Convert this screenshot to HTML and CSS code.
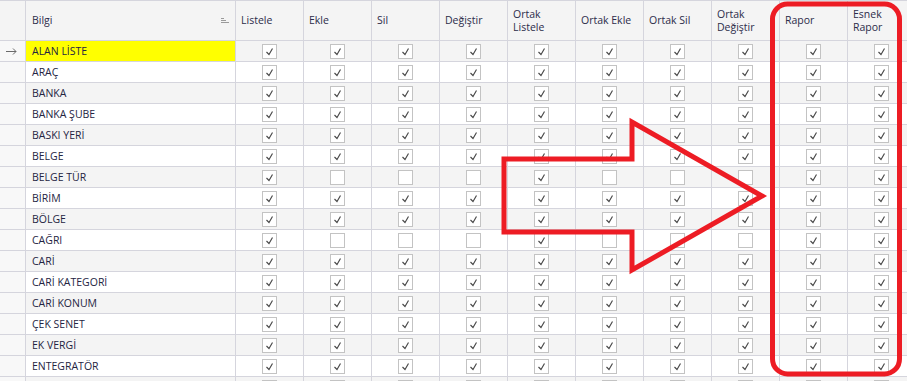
FILE: index.html
```html
<!DOCTYPE html>
<html>

<head>
    <title>Yetkiler</title>
    <link rel="stylesheet" href="styles.css">
</head>

<body>

    <div class="grid" id="grid">
        <div class="row head">
            <div class="ind"></div>
            <div class="name-head">
                <span>Bilgi</span>
                <svg class="sort" width="9" height="6" viewBox="0 0 9 6">
                    <path d="M0 0.5H3M0 2.5H5M0 4.5H8" stroke="#9a9a9a" stroke-width="1" />
                </svg>
            </div>
            <div>Listele</div>
            <div>Ekle</div>
            <div>Sil</div>
            <div>Değiştir</div>
            <div>Ortak<br>Listele</div>
            <div>Ortak Ekle</div>
            <div>Ortak Sil</div>
            <div>Ortak<br>Değiştir</div>
            <div>Rapor</div>
            <div>Esnek<br>Rapor</div>
        </div>

        <svg class="overlay" width="907" height="381" viewBox="0 0 907 381">
            <polygon points="504,159 632,159 632,122 762,196 632,270 632,232 504,232" fill="none" stroke="#ed1c24" stroke-width="5" stroke-linejoin="miter" />
            <rect x="772.5" y="4" width="127" height="370" rx="15" ry="15" fill="none" stroke="#ed1c24" stroke-width="5" />
        </svg>
    </div>

    <script>
        const rows = [
            [ "ALAN LİSTE", 1 ], [ "ARAÇ", 1 ], [ "BANKA", 1 ], [ "BANKA ŞUBE", 1 ],
            [ "BASKI YERİ", 1 ], [ "BELGE", 1 ], [ "BELGE TÜR", 0 ], [ "BİRİM", 1 ],
            [ "BÖLGE", 1 ], [ "CAĞRI", 0 ], [ "CARİ", 1 ], [ "CARİ KATEGORİ", 1 ],
            [ "CARİ KONUM", 1 ], [ "ÇEK SENET", 1 ], [ "EK VERGİ", 1 ], [ "ENTEGRATÖR", 1 ], [ "", 1 ]
        ];

        // Ekle, Sil, Değiştir, Ortak Ekle, Ortak Sil, Ortak Değiştir are off for limited rows
        const limited = [ 1, 2, 3, 5, 6, 7 ];

        const checked = '<svg class="cb" width="15" height="15" viewBox="0 0 15 15"><rect x="0.5" y="0.5" width="14" height="14" fill="#fff" stroke="#c3c3c3"/><path d="M4.5 8L7 10.5L10.5 4.5" fill="none" stroke="#484848" stroke-width="1.15"/></svg>';
        const empty = '<svg class="cb" width="15" height="15" viewBox="0 0 15 15"><rect x="0.5" y="0.5" width="14" height="14" fill="#fff" stroke="#c3c3c3"/></svg>';
        const pointer = '<svg width="11" height="7" viewBox="0 0 11 7"><path d="M0 3.5H10M7 0.5L10 3.5L7 6.5" fill="none" stroke="#6a6a6a" stroke-width="1"/></svg>';

        const grid = document.getElementById( "grid" );
        const overlay = grid.querySelector( ".overlay" );

        rows.forEach( ( r, i ) => {
            const row = document.createElement( "div" );
            row.className = "row data" + ( i % 2 === 0 ? " alt" : "" );
            let html = `<div class="ind">${i === 0 ? pointer : ""}</div>`;
            html += `<div class="name${i === 0 ? " focus" : ""}">${r[ 0 ]}</div>`;
            for ( let c = 0; c < 10; c++ ) {
                const on = r[ 1 ] || !limited.includes( c );
                html += `<div class="check">${on ? checked : empty}</div>`;
            }
            row.innerHTML = html;
            grid.insertBefore( row, overlay );
        } );
    </script>
</body>

</html>
```

FILE: styles.css
```css
body {
    font-family: "Open Sans", "Noto Sans", sans-serif;
    font-size: 10.5px;
    color: #242442;
    background: #fff;
    margin: 0;
    padding: 0;
    overflow: hidden;
}

.grid {
    position: relative;
    width: 907px;
    height: 381px;
    overflow: hidden;
}

.row {
    display: grid;
    grid-template-columns: 26px 210px repeat(10, 68px);
}

.row > div {
    box-sizing: border-box;
    border-right: 1px solid #d5d5dd;
    border-bottom: 1px solid #d5d5dd;
    display: flex;
    align-items: center;
}

.head {
    border-top: 1px solid #d5d5dd;
    background: #f4f4f4;
    color: #2c2c4a;
}

.head > div {
    height: 40px;
    padding: 0 5px;
    line-height: 13px;
}

.head .ind {
    padding: 0;
}

.name-head {
    justify-content: space-between;
    padding-left: 6px !important;
}

.sort {
    margin-top: 1px;
    margin-right: 0;
}

.data > div {
    height: 21px;
}

.data.alt {
    background: #f4f4f4;
}

.data .ind {
    background: #f8f8f8;
    justify-content: center;
    padding-right: 2px;
}

.data .name {
    padding-left: 6px;
    white-space: nowrap;
}

.data .focus {
    background: #ffff00;
}

.check {
    justify-content: center;
}

.cb {
    display: block;
}

.overlay {
    position: absolute;
    top: 0;
    left: 0;
    pointer-events: none;
}
```
